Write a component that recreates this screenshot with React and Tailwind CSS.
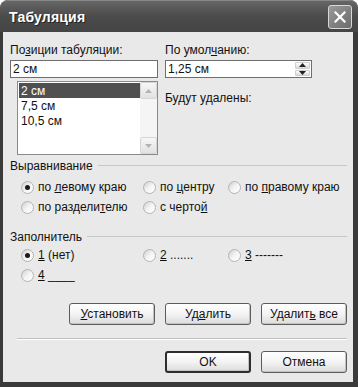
import React from "react";

const F = { fontFamily: '"Liberation Sans", Arial, sans-serif' };

function Radio({ checked }) {
  return (
    <span className="w-[13px] h-[13px] shrink-0 rounded-full border border-[#b4b4b4] bg-gradient-to-br from-[#cfcfcf] via-[#f4f4f4] to-white flex items-center justify-center">
      {checked && <span className="w-[5px] h-[5px] rounded-full bg-[#1a1a1a]" />}
    </span>
  );
}

function RadioItem({ checked, children, w }) {
  return (
    <div className={`flex items-center gap-[4px] ${w || ""}`}>
      <Radio checked={checked} />
      <span className="whitespace-nowrap">{children}</span>
    </div>
  );
}

function Group({ title }) {
  return (
    <div className="flex items-center h-[14px] gap-[5px]">
      <span className="whitespace-nowrap">{title}</span>
      <div className="flex-1 h-[2px] border-t border-[#c8c8c8] border-b-white" />
    </div>
  );
}

function Btn({ children, def }) {
  return (
    <div
      className={`w-[86px] h-[22px] rounded-[3px] flex items-center justify-center bg-gradient-to-b from-white via-[#f3f3f3] to-[#dcdcdc] ${
        def ? "border-[2px] border-[#2e2e2e]" : "border border-[#5c5c5c]"
      } shadow-[inset_-1px_-1px_0_#c2c2c2]`}
    >
      <span className="whitespace-pre">{children}</span>
    </div>
  );
}

function Tri({ up, color }) {
  return (
    <svg width="7" height="4" viewBox="0 0 7 4">
      {up ? <path d="M0 4 L3.5 0 L7 4 Z" fill={color} /> : <path d="M0 0 L3.5 4 L7 0 Z" fill={color} />}
    </svg>
  );
}

export default function App() {
  return (
    <div
      style={F}
      className="w-[358px] h-[387px] bg-[#3a3a3a] rounded-t-[8px] flex flex-col text-[12px] text-[#111] leading-[14px] overflow-hidden"
    >
      {/* title bar */}
      <div className="h-[32px] shrink-0 rounded-t-[8px] bg-gradient-to-b from-[#666] via-[#4b4b4b] to-[#454545] flex items-center pl-[9px] pr-[6px] border-t border-[#888]">
        <span className="text-white font-bold text-[14px] tracking-[0.2px] [text-shadow:1px_1px_0_#222]">
          Табуляция
        </span>
        <div className="ml-auto w-[24px] h-[24px] rounded-[3px] border border-[#d8d8d8] bg-gradient-to-br from-[#9a9a9a] to-[#6c6c6c] flex items-center justify-center">
          <svg width="12" height="12" viewBox="0 0 12 12">
            <path d="M1.5 1.5 L10.5 10.5 M10.5 1.5 L1.5 10.5" stroke="white" strokeWidth="2.2" strokeLinecap="square" />
          </svg>
        </div>
      </div>

      {/* body */}
      <div className="flex-1 ml-[3px] mr-[5px] mb-[5px] bg-[#e9e9e9] pl-[7px] pr-[6px] pt-[11px] flex flex-col">
        {/* top area */}
        <div className="flex gap-[7px]">
          <div className="w-[148px] flex flex-col">
            <div className="h-[14px]">
              По<u>з</u>иции табуляции:
            </div>
            <div className="mt-[3px] h-[18px] bg-white border border-[#6e6e6e] flex items-center pl-[2px]">2 см</div>
            <div className="mt-[3px] ml-[7px] h-[74px] bg-white border border-[#8a8a8a] flex">
              <div className="flex-1 pt-[1px] pl-[1px]">
                <div className="h-[15px] bg-[#505050] text-white flex items-center pl-[2px]">2 см</div>
                <div className="h-[15px] flex items-center pl-[2px]">7,5 см</div>
                <div className="h-[15px] flex items-center pl-[2px]">10,5 см</div>
              </div>
              <div className="w-[17px] bg-[#f5f5f5] flex flex-col justify-between">
                <div className="h-[17px] bg-gradient-to-b from-[#f6f6f6] to-[#e2e2e2] border border-[#d6d6d6] rounded-[2px] flex items-center justify-center">
                  <Tri up color="#b4b4b4" />
                </div>
                <div className="h-[17px] bg-gradient-to-b from-[#f6f6f6] to-[#e2e2e2] border border-[#d6d6d6] rounded-[2px] flex items-center justify-center">
                  <Tri color="#b4b4b4" />
                </div>
              </div>
            </div>
          </div>
          <div className="w-[147px] flex flex-col">
            <div className="h-[14px]">
              По умол<u>ч</u>анию:
            </div>
            <div className="mt-[3px] h-[18px] bg-white border border-[#6e6e6e] flex items-center">
              <span className="pl-[2px] flex-1">1,25 см</span>
              <div className="w-[16px] h-full flex flex-col gap-[1px] py-[1px] pr-[1px]">
                <div className="flex-1 rounded-[1px] bg-gradient-to-b from-white to-[#dadada] border border-[#cfcfcf] flex items-center justify-center">
                  <Tri up color="#222" />
                </div>
                <div className="flex-1 rounded-[1px] bg-gradient-to-b from-white to-[#dadada] border border-[#cfcfcf] flex items-center justify-center">
                  <Tri color="#222" />
                </div>
              </div>
            </div>
            <div className="mt-[13px] h-[14px]">Будут удалены:</div>
          </div>
        </div>

        {/* alignment */}
        <div className="mt-[4px]">
          <Group title="Выравнивание" />
        </div>
        <div className="mt-[4px] pl-[11px] flex flex-col">
          <div className="h-[20px] flex items-center">
            <RadioItem checked w="w-[122px]">
              по <u>л</u>евому краю
            </RadioItem>
            <RadioItem w="w-[85px]">
              по <u>ц</u>ентру
            </RadioItem>
            <RadioItem>
              по <u>п</u>равому краю
            </RadioItem>
          </div>
          <div className="h-[20px] flex items-center">
            <RadioItem w="w-[122px]">
              по раздели<u>т</u>елю
            </RadioItem>
            <RadioItem>
              с черто<u>й</u>
            </RadioItem>
          </div>
        </div>

        {/* leader */}
        <div className="mt-[13px]">
          <Group title="Заполнитель" />
        </div>
        <div className="mt-[1px] pl-[11px] flex flex-col">
          <div className="h-[20px] flex items-center">
            <RadioItem checked w="w-[122px]">
              <u>1</u> (нет)
            </RadioItem>
            <RadioItem w="w-[85px]">
              <u>2</u> .......
            </RadioItem>
            <RadioItem>
              <u>3</u> -------
            </RadioItem>
          </div>
          <div className="h-[20px] flex items-center">
            <RadioItem>
              <u>4</u> ____
            </RadioItem>
          </div>
        </div>

        {/* buttons */}
        <div className="mt-[18px] flex justify-end gap-[10px]">
          <Btn>
            <u>У</u>становить
          </Btn>
          <Btn>
            Уд<u>а</u>лить
          </Btn>
          <Btn>
            Удалит<u>ь</u>{" все"}
          </Btn>
        </div>

        <div className="mt-[13px] ml-[7px] h-[2px] border-t border-[#c0c0c0] border-b border-b-white" />

        <div className="mt-[11px] flex justify-end gap-[10px]">
          <Btn def>OK</Btn>
          <Btn>Отмена</Btn>
        </div>
      </div>
    </div>
  );
}
